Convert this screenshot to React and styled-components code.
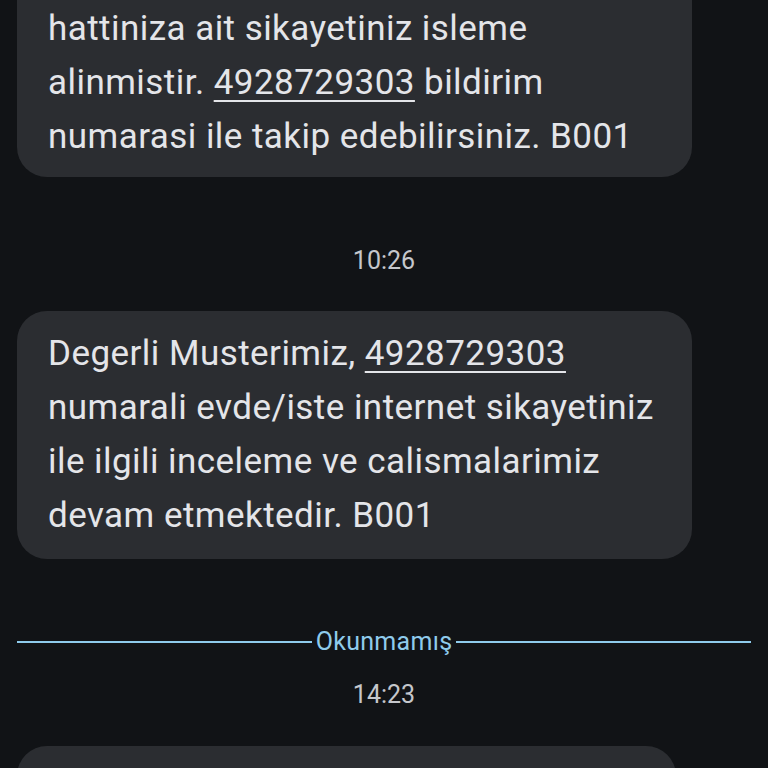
import React from "react";
import styled, { createGlobalStyle } from "styled-components";

const Global = createGlobalStyle`
  html, body { margin: 0; padding: 0; background: #111316; }
  body { font-family: Roboto, "Noto Sans", sans-serif; }
`;

const Screen = styled.div`
  width: 768px;
  height: 768px;
  overflow: hidden;
  background: #111316;
  display: flex;
  flex-direction: column;
`;

const Bubble = styled.div`
  width: ${(p) => p.$w}px;
  margin-left: 17px;
  box-sizing: border-box;
  background: #2b2d31;
  border-radius: ${(p) => (p.$cut ? "0 0 30px 30px" : "30px")};
  padding: ${(p) => (p.$cut ? "2px 0 13px 31px" : "16px 0 16px 31px")};
  color: #e4e5e9;
  font-size: 35px;
  line-height: 54px;
  letter-spacing: 0.45px;
  flex-shrink: 0;
  min-height: ${(p) => p.$minH || 0}px;
`;

const Line = styled.div`
  white-space: nowrap;
`;

const Num = styled.span`
  text-decoration: underline;
  text-decoration-thickness: 2px;
  text-underline-offset: 6px;
`;

const Stamp = styled.div`
  text-align: center;
  color: #c5c7cc;
  font-size: 25px;
  line-height: 30px;
  margin-top: ${(p) => p.$top}px;
  margin-bottom: ${(p) => p.$bottom}px;
`;

const Divider = styled.div`
  display: flex;
  align-items: center;
  margin: 68px 17px 0 17px;
  height: 30px;
  gap: 4px;
  color: #8fcbec;
  font-size: 25px;
  letter-spacing: 0.3px;
`;

const Rule = styled.div`
  flex: 1;
  height: 2px;
  background: #8fcbec;
`;

export default function App() {
  return (
    <>
      <Global />
      <Screen>
        <Bubble $w={675} $cut>
          <Line>hattiniza ait sikayetiniz isleme</Line>
          <Line>
            alinmistir. <Num>4928729303</Num> bildirim
          </Line>
          <Line>numarasi ile takip edebilirsiniz. B001</Line>
        </Bubble>
        <Stamp $top={69} $bottom={35}>10:26</Stamp>
        <Bubble $w={675}>
          <Line>
            Degerli Musterimiz, <Num>4928729303</Num>
          </Line>
          <Line>numarali evde/iste internet sikayetiniz</Line>
          <Line>ile ilgili inceleme ve calismalarimiz</Line>
          <Line>devam etmektedir. B001</Line>
        </Bubble>
        <Divider>
          <Rule />
          <span>Okunmamış</span>
          <Rule />
        </Divider>
        <Stamp $top={24} $bottom={36}>14:23</Stamp>
        <Bubble $w={659} $minH={120} />
      </Screen>
    </>
  );
}
